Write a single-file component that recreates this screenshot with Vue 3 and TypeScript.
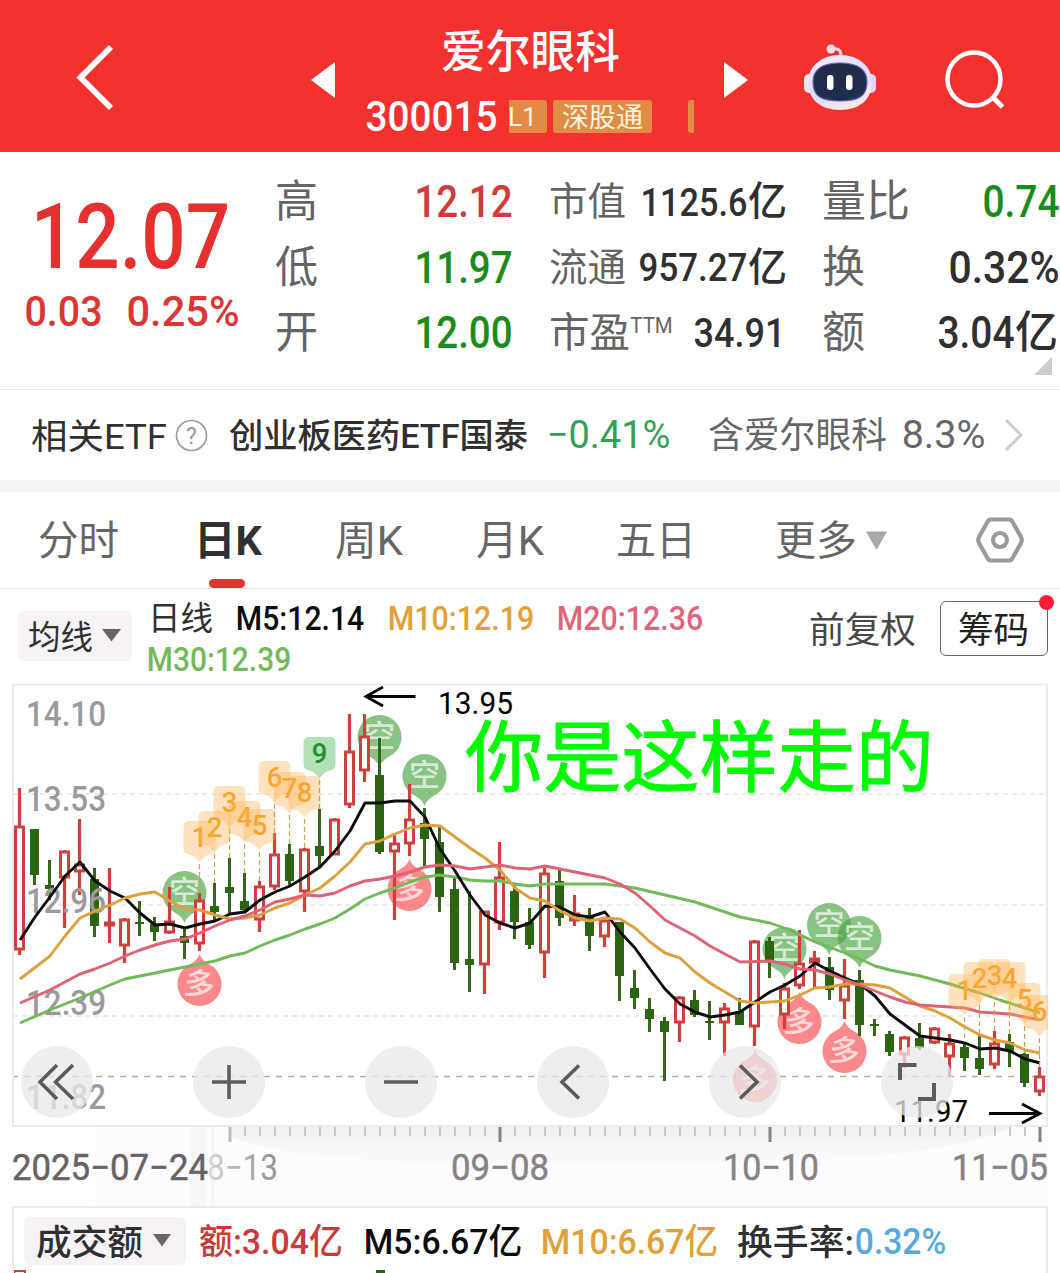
<script setup lang="ts">
import { h, type FunctionalComponent } from 'vue'

interface FitProps { t: string; w: number; s: number; b?: number }

// Condensed label: stretches its glyphs to the given width; the box bottom is the baseline.
const Fit: FunctionalComponent<FitProps> = (p) => {
  const bearing = p.t.charCodeAt(0) > 0x3000 ? 0 : p.s * 0.035
  return h('svg', { width: p.w, height: p.s, style: 'overflow:visible;flex:none;display:block' }, [
    h('text', {
      x: -bearing, y: p.s, 'font-size': p.s, 'font-weight': p.b ?? 400, fill: 'currentColor',
      textLength: p.w + bearing * 2, lengthAdjust: 'spacingAndGlyphs',
    }, p.t),
  ])
}
Fit.props = ['t', 'w', 's', 'b']

type Candle = [kind: 'R' | 'G', high: number, top: number, bottom: number, low: number]
const candles: Candle[] = [
  ['R', 788, 826, 950, 955], ['G', 829, 829, 875, 885], ['G', 860, 885, 889, 900], ['R', 850, 851, 878, 928],
  ['R', 819, 864, 872, 895], ['G', 868, 879, 926, 937], ['R', 868, 922, 926, 943], ['R', 918, 919, 946, 963],
  ['G', 901, 922, 924, 936], ['G', 917, 924, 932, 941], ['R', 887, 921, 933, 934], ['G', 928, 936, 943, 959],
  ['R', 893, 900, 944, 951], ['G', 883, 906, 912, 922], ['G', 858, 887, 893, 913], ['G', 873, 901, 910, 913],
  ['R', 881, 886, 920, 932], ['R', 833, 854, 887, 890], ['G', 844, 854, 881, 885], ['R', 848, 849, 892, 912],
  ['G', 809, 846, 856, 867], ['R', 818, 819, 855, 855], ['R', 714, 751, 805, 808], ['R', 714, 736, 771, 782],
  ['G', 738, 775, 852, 854], ['R', 833, 843, 852, 920], ['R', 784, 819, 844, 856], ['G', 808, 823, 839, 867],
  ['G', 825, 842, 897, 912], ['G', 877, 889, 963, 970], ['G', 891, 959, 965, 992], ['R', 911, 911, 965, 994],
  ['R', 842, 877, 923, 930], ['G', 883, 891, 922, 939], ['G', 908, 922, 945, 949], ['R', 868, 873, 953, 978],
  ['G', 870, 881, 918, 926], ['R', 895, 913, 921, 926], ['G', 908, 915, 936, 951], ['R', 917, 920, 937, 947],
  ['G', 922, 922, 976, 1001], ['G', 970, 988, 998, 1009], ['G', 998, 1009, 1019, 1032], ['G', 1017, 1021, 1032, 1081],
  ['R', 996, 997, 1023, 1042], ['G', 990, 1000, 1015, 1017], ['G', 1001, 1021, 1023, 1040], ['R', 1003, 1008, 1023, 1056],
  ['G', 998, 1011, 1025, 1025], ['R', 940, 941, 1027, 1046], ['G', 937, 941, 962, 978], ['R', 983, 988, 1015, 1029],
  ['R', 930, 963, 986, 989], ['R', 951, 958, 963, 988], ['G', 957, 967, 990, 1000], ['R', 959, 985, 1001, 1019],
  ['G', 970, 980, 1025, 1036], ['G', 1019, 1024, 1026, 1036], ['G', 1031, 1034, 1052, 1056], ['R', 1036, 1037, 1055, 1068],
  ['G', 1023, 1038, 1048, 1050], ['R', 1027, 1028, 1043, 1044], ['R', 1034, 1043, 1057, 1077], ['G', 1042, 1047, 1058, 1071],
  ['G', 1034, 1058, 1069, 1075], ['R', 1031, 1043, 1065, 1069], ['G', 1034, 1042, 1051, 1067], ['G', 1053, 1054, 1083, 1087],
  ['R', 1067, 1076, 1092, 1096],
]
const cx = (i: number) => 19.5 + 15 * i

const averages = [
  { c: '#72b95a', d: '20,1023 50,1010 80,998 110,985 125,979 140,976 155,973 170,970 185,967 200,964 215,961 230,956 245,953 260,946 275,940 290,935 305,929 320,924 335,918 350,909 365,899 380,893 395,888 410,882 425,877 440,875 455,877 470,880 485,881 500,881 515,884 530,886 545,884 605,884 635,888 665,895 695,902 740,917 770,923 790,930 815,942 845,953 860,959 875,966 890,970 920,976 950,984 980,993 1000,1000 1025,1008 1040,1013' },
  { c: '#0c0c0c', d: '20,940 35,917 50,897 65,876 80,862 95,881 110,891 125,898 140,913 155,925 170,924 185,928 200,924 215,921 230,914 245,912 260,900 275,892 290,886 305,877 320,867 335,851 350,831 365,803 380,803 395,801 410,801 425,817 440,849 455,871 470,895 485,915 500,923 515,928 530,923 545,906 560,907 575,915 590,917 605,912 620,932 635,948 650,969 665,989 680,1004 695,1012 710,1017 725,1015 740,1012 755,1002 770,992 785,985 800,976 815,963 830,971 845,978 860,984 875,996 890,1014 905,1025 920,1036 935,1038 950,1040 965,1043 980,1049 995,1048 1010,1051 1025,1059 1040,1063' },
  { c: '#dda03c', d: '20,979 50,956 65,936 80,918 95,911 110,905 125,898 140,894 155,892 170,901 185,909 200,910 215,915 230,919 245,918 260,915 275,908 290,903 305,895 320,888 335,876 350,862 365,844 380,841 395,834 410,828 425,825 440,826 455,837 470,848 485,858 500,870 515,888 530,898 545,901 560,911 575,918 590,921 605,918 620,919 635,928 650,942 665,953 680,958 695,972 710,983 725,992 740,1001 755,1003 770,1002 785,1001 800,995 815,988 830,987 845,984 860,984 875,985 890,988 905,997 920,1006 935,1011 950,1018 965,1027 980,1035 995,1040 1010,1043 1025,1050 1040,1053' },
  { c: '#df6275', d: '20,1003 50,990 80,974 95,969 110,963 125,956 140,950 155,945 170,941 185,939 200,933 215,926 230,920 245,916 260,910 275,902 290,899 305,895 320,896 335,893 350,886 365,881 380,879 395,876 410,872 425,867 440,865 455,866 470,869 485,867 500,865 515,868 530,869 545,866 560,869 605,878 620,884 635,893 650,906 665,920 680,928 695,936 710,946 725,954 740,962 770,961 785,964 800,969 815,970 830,974 845,980 860,985 875,991 890,997 905,1002 920,1005 950,1007 965,1008 980,1012 1010,1014 1040,1020' },
]

const shortPins = [[184.5, 893], [379.5, 737], [424.5, 776], [784.5, 949], [829, 925], [859.5, 938]]
const longPins = [[199.5, 984], [409.5, 889], [755, 1080], [799.5, 1022], [844.5, 1051]]

// [digit, candle index, top of the tag]
const tags: [string, number, number][] = [
  ['1', 12, 821], ['2', 13, 811], ['3', 14, 786], ['4', 15, 801], ['5', 16, 809], ['6', 17, 761], ['7', 18, 772], ['8', 19, 776], ['9', 20, 737],
  ['1', 63, 974], ['2', 64, 962], ['3', 65, 959], ['4', 66, 962], ['5', 67, 983], ['6', 68, 995],
]
const tagPath = (x: number, y: number) =>
  `M${x - 11} ${y}h22a5 5 0 0 1 5 5v23q0 4 -4 5l-6 2l-6 6l-6 -6l-6 -2q-4 -1 -4 -5v-23a5 5 0 0 1 5 -5z`

const prices = [['14.10', 726], ['13.53', 811], ['12.96', 913], ['12.39', 1015], ['11.82', 1109]] as const
const ticks = Array.from({ length: 55 }, (_, i) => ({ x: 230 + 15 * i, major: i % 18 === 0 }))
const tools = [
  'M36 19L19 36L36 53M52 19L34.500 36L52 53',
  'M19 36H53M36 19V53',
  'M19 36H53',
  'M42 19.500L25 36L42 52.500',
  'M31 19.500L48 36L31 52.500',
  'M19 34V19H35.500M53 37V53H37',
]
</script>

<template>
  <main class="page">
    <header class="top">
      <svg class="back" width="40" height="70" viewBox="0 0 40 70"><path d="M36 5L5.500 35.500L36 66" fill="none" stroke="#fff" stroke-width="5.800" /></svg>
      <svg class="prev" width="24" height="36" viewBox="0 0 24 36"><path d="M24 0V36L0 18z" fill="#fff" /></svg>
      <div class="stock">
        <Fit class="name" t="爱尔眼科" :w="179" :s="45" :b="500" />
        <div class="code">
          <Fit t="300015" :w="129" :s="42" :b="500" />
          <div class="badges">
            <div class="badge first"><Fit t="L1" :w="27" :s="26" /></div>
            <div class="badge mid"><Fit t="深股通" :w="81" :s="27" /></div>
            <div class="badge last"></div>
          </div>
        </div>
      </div>
      <svg class="next" width="24" height="36" viewBox="0 0 24 36"><path d="M0 0V36L24 18z" fill="#fff" /></svg>
      <svg class="bot" width="74" height="70" viewBox="0 0 74 70">
        <defs>
          <linearGradient id="shell" x1="0" y1="0" x2="0.6" y2="1"><stop offset="0" stop-color="#fff4fa" /><stop offset=".55" stop-color="#dfdcfb" /><stop offset="1" stop-color="#f6e8ee" /></linearGradient>
          <linearGradient id="visor" x1="0" y1="0" x2="0" y2="1"><stop offset="0" stop-color="#232b45" /><stop offset="1" stop-color="#1c2f50" /></linearGradient>
        </defs>
        <path d="M38 13C38 6 34 5 29 6" fill="none" stroke="#f8dbe4" stroke-width="3" /><circle cx="28" cy="6" r="4.500" fill="#fbe0e8" />
        <rect x="1" y="31" width="12" height="19" rx="5" fill="#f5e3f1" /><rect x="61" y="31" width="12" height="19" rx="5" fill="#e3d3f6" />
        <path d="M37 12C56 12 69 24 69 39C69 56 57 67 37 67C17 67 5 56 5 39C5 24 18 12 37 12z" fill="url(#shell)" />
        <path d="M37 20C54 20 64 26 64 39C64 53 56 58 37 58C18 58 10 53 10 39C10 26 20 20 37 20z" fill="url(#visor)" stroke="#6a60c0" stroke-width="1.200" />
        <rect x="24" y="32" width="6.500" height="15" rx="3" fill="#fff" /><rect x="43" y="32" width="6.500" height="15" rx="3" fill="#fff" />
      </svg>
      <svg class="search" width="62" height="64" viewBox="0 0 62 64"><g fill="none" stroke="#fff" stroke-width="4.500"><circle cx="30" cy="31" r="26.500" /><path d="M48.500 49L58.500 59" stroke-width="5" /></g></svg>
    </header>

    <section class="quote">
      <div class="price">
        <Fit class="big" t="12.07" :w="193" :s="90" :b="500" />
        <div class="change"><Fit t="0.03" :w="75" :s="43" :b="500" /><Fit t="0.25%" :w="110" :s="43" :b="500" /></div>
      </div>
      <dl class="col c1">
        <div><dt><Fit t="高" :w="43" :s="44" /></dt><dd class="up"><Fit t="12.12" :w="95" :s="45" :b="500" /></dd></div>
        <div><dt><Fit t="低" :w="43" :s="44" /></dt><dd class="down"><Fit t="11.97" :w="95" :s="45" :b="500" /></dd></div>
        <div><dt><Fit t="开" :w="43" :s="44" /></dt><dd class="down"><Fit t="12.00" :w="95" :s="45" :b="500" /></dd></div>
      </dl>
      <dl class="col c2">
        <div><dt><Fit t="市值" :w="77" :s="39" /></dt><dd><Fit t="1125.6" :w="104" :s="39.500" :b="500" /><Fit t="亿" :w="39" :s="40" :b="500" /></dd></div>
        <div><dt><Fit t="流通" :w="77" :s="39" /></dt><dd><Fit t="957.27" :w="106" :s="39.500" :b="500" /><Fit t="亿" :w="39" :s="40" :b="500" /></dd></div>
        <div><dt><Fit t="市盈" :w="81" :s="41" /><Fit class="ttm" t="TTM" :w="41" :s="22" /></dt><dd class="pe"><Fit t="34.91" :w="89" :s="41.500" :b="500" /></dd></div>
      </dl>
      <dl class="col c3">
        <div><dt><Fit t="量比" :w="88" :s="44" /></dt><dd class="down"><Fit t="0.74" :w="74" :s="45" :b="500" /></dd></div>
        <div><dt><Fit t="换" :w="43" :s="44" /></dt><dd><Fit t="0.32%" :w="108" :s="45" :b="500" /></dd></div>
        <div><dt><Fit t="额" :w="43" :s="44" /></dt><dd><Fit t="3.04" :w="74" :s="45" :b="500" /><Fit t="亿" :w="43" :s="44" :b="500" /></dd></div>
      </dl>
      <svg class="corner" width="18" height="18"><path d="M18 0V18H0z" fill="#ccc" /></svg>
    </section>

    <section class="etf">
      <Fit t="相关ETF" :w="136" :s="35.500" />
      <svg class="help" width="33" height="33" viewBox="0 0 33 33"><circle cx="16.500" cy="16.500" r="15" fill="none" stroke="#999" stroke-width="1.600" /><text x="16.500" y="24.500" font-size="23" text-anchor="middle" fill="#999">?</text></svg>
      <Fit class="fund" t="创业板医药ETF国泰" :w="299" :s="34" :b="500" />
      <Fit class="loss" t="−0.41%" :w="121" :s="39" />
      <Fit class="holds" t="含爱尔眼科" :w="179" :s="36" />
      <Fit class="pct" t="8.3%" :w="81" :s="39" />
      <svg class="go" width="20" height="34" viewBox="0 0 20 34"><path d="M2 2L17 17L2 32" fill="none" stroke="#ccc" stroke-width="3" /></svg>
    </section>

    <nav class="tabs">
      <Fit t="分时" :w="81" :s="41" />
      <div class="on"><Fit t="日K" :w="68" :s="41" :b="700" /></div>
      <Fit t="周K" :w="68" :s="41" />
      <Fit t="月K" :w="68" :s="41" />
      <Fit t="五日" :w="80" :s="41" />
      <Fit t="更多" :w="82" :s="41" />
      <svg class="more" width="23" height="19"><path d="M1 .5H22L11.500 19z" fill="#aaa8aa" /></svg>
      <svg class="gear" width="50" height="48" viewBox="0 0 50 48"><path d="M16 3.500H34Q36 3.500 37 5L46 21Q47.500 24 46 27L37 43Q36 44.500 34 44.500H16Q14 44.500 13 43L4 27Q2.500 24 4 21L13 5Q14 3.500 16 3.500z" fill="none" stroke="#999" stroke-width="4.200" /><circle cx="25" cy="24" r="7" fill="none" stroke="#999" stroke-width="4.200" /></svg>
    </nav>

    <section class="ma">
      <div class="chip"><Fit t="均线" :w="65" :s="33" /><svg width="19" height="13"><path d="M0 0H19L9.500 12.500z" fill="#666" /></svg></div>
      <div class="legend">
        <div class="line">
          <Fit class="day" t="日线" :w="65" :s="33" />
          <Fit class="m5" t="M5:12.14" :w="126" :s="33" :b="500" />
          <Fit class="m10" t="M10:12.19" :w="144" :s="33" :b="500" />
          <Fit class="m20" t="M20:12.36" :w="144" :s="33" :b="500" />
        </div>
        <Fit class="m30" t="M30:12.39" :w="142" :s="33" :b="500" />
      </div>
      <Fit class="adjust" t="前复权" :w="107" :s="36" />
      <div class="cost"><Fit t="筹码" :w="71" :s="36" /><i></i></div>
    </section>

    <section class="chart">
      <svg width="1060" height="526" viewBox="0 680 1060 526">
        <defs>
          <linearGradient id="haze" x1="0" y1="0" x2="0" y2="1"><stop offset="0" stop-color="#f1eff2" /><stop offset=".5" stop-color="#f8f5f9" /><stop offset="1" stop-color="#fbf8fb" /></linearGradient>
          <linearGradient id="fade" gradientUnits="userSpaceOnUse" x1="200" y1="0" x2="275" y2="0"><stop offset="0" stop-color="#e8e6e8" /><stop offset=".4" stop-color="#bbb" /><stop offset="1" stop-color="#949294" /></linearGradient>
          <clipPath id="frame"><rect x="12" y="684" width="1036" height="443" /></clipPath>
        </defs>
        <rect x="95" y="1127" width="953" height="79" fill="#fefbfe" />
        <path d="M230 1127H1010Q950 1158 760 1162H420Q280 1158 230 1136z" fill="url(#haze)" />
        <path d="M191 1127h15v83h-15zM211 1127h4v83h-4z" fill="#f7f6f7" />
        <g stroke="#e6e6e6" stroke-width="1.500" stroke-dasharray="5 4"><path d="M13 794H1047M13 905H1047M13 1016H1047" /></g>
        <path d="M12 1076.500H1047" stroke="#b7aa88" stroke-width="1.600" stroke-dasharray="6 6" />
        <rect x="13" y="684.500" width="1034" height="441.500" fill="none" stroke="#ebebeb" stroke-width="2" />

        <g v-for="[x, y] in shortPins" :key="`s${x}`" :transform="`translate(${x} ${y})`">
          <path d="M0 30Q-2 24 -9 20A22 22 0 1 1 9 20Q2 24 0 30z" fill="#4fa548" fill-opacity=".67" />
          <text y="10" font-size="31" font-weight="500" text-anchor="middle" fill="#fff" fill-opacity=".68">空</text>
        </g>
        <g v-for="[x, y] in longPins" :key="`l${x}`" :transform="`translate(${x} ${y})`">
          <path d="M0 -30Q2 -24 9 -20A22 22 0 1 1 -9 -20Q-2 -24 0 -30z" fill="#f9494f" fill-opacity=".65" />
          <text y="11" font-size="31" font-weight="500" text-anchor="middle" fill="#fff" fill-opacity=".68" transform="rotate(8)">多</text>
        </g>

        <g v-for="([k, hi, top, bot, lo], i) in candles" :key="i">
          <template v-if="k === 'R'">
            <path :d="`M${cx(i)} ${hi}V${top}M${cx(i)} ${bot}V${lo}`" stroke="#cf403c" stroke-width="3.200" />
            <rect :x="cx(i) - 4" :y="top + 1" width="8" :height="Math.max(bot - top - 2, 1)" :fill="bot - top < 6 ? '#cf403c' : '#fff'" stroke="#cf403c" stroke-width="3" />
          </template>
          <template v-else>
            <path :d="`M${cx(i)} ${hi}V${lo}`" stroke="#38651e" stroke-width="3" />
            <rect :x="cx(i) - 4.500" :y="top" width="9" :height="bot - top" fill="#2c6411" />
          </template>
        </g>

        <text v-for="[t, y] in prices" :key="t" x="26" :y="y" textLength="80" lengthAdjust="spacingAndGlyphs" font-size="34.500" font-weight="500" fill="#9b999b">{{ t }}</text>
        <polyline v-for="a in averages" :key="a.c" :points="a.d" fill="none" :stroke="a.c" stroke-width="2.900" stroke-linejoin="round" />

        <g clip-path="url(#frame)">
          <g v-for="([n, i, y], k) in tags" :key="k">
            <path :d="`M${cx(i)} ${y + 43}V${candles[i][1]}`" stroke="#c8a158" stroke-width="1.200" stroke-dasharray="5 3" />
            <path :d="tagPath(cx(i), y)" :fill="n === '9' ? '#5cbd66' : '#fdb04e'" :fill-opacity="n === '9' ? 0.47 : 0.37" />
            <text :x="cx(i)" :y="y + 26" font-size="27.500" font-weight="500" text-anchor="middle" :fill="n === '9' ? '#26902b' : '#f8a530'">{{ n }}</text>
          </g>
        </g>

        <g fill="none" stroke="#000" stroke-width="2.800"><path d="M415.500 696.500H366M383 687L366 696.500L383 706M989 1113.500H1039M1022 1104L1040 1113.500L1022 1123" /></g>
        <text x="438" y="714" textLength="75" lengthAdjust="spacingAndGlyphs" font-size="30.500">13.95</text>
        <text x="894" y="1122" textLength="74" lengthAdjust="spacingAndGlyphs" font-size="30.500">11.97</text>
        <text x="465" y="786" textLength="469" lengthAdjust="spacingAndGlyphs" font-size="78" font-weight="400" fill="#00fb00" stroke="#00fb00" stroke-width=".9">你是这样走的</text>

        <path v-for="t in ticks" :key="t.x" :d="`M${t.x} 1127V${t.major ? 1142 : 1136}`" :stroke="t.major ? (t.x === 230 ? '#bbb' : '#858385') : '#c4c2c4'" :stroke-width="t.major ? 3 : 1.800" />
        <g font-size="36" font-weight="400" stroke-width=".5">
          <text x="207" y="1180" textLength="71" lengthAdjust="spacingAndGlyphs" fill="url(#fade)">8−13</text>
          <text x="12" y="1180" textLength="196" lengthAdjust="spacingAndGlyphs" fill="#656365" stroke="#656365">2025−07−24</text>
          <text x="451" y="1180" textLength="98" lengthAdjust="spacingAndGlyphs" fill="#858385" stroke="#858385">09−08</text>
          <text x="723" y="1180" textLength="96" lengthAdjust="spacingAndGlyphs" fill="#858385" stroke="#858385">10−10</text>
          <text x="952" y="1180" textLength="96" lengthAdjust="spacingAndGlyphs" fill="#858385" stroke="#858385">11−05</text>
        </g>
      </svg>
      <div class="tools">
        <button v-for="(d, i) in tools" :key="i"><svg width="72" height="72"><path :d="d" fill="none" stroke="#5c5c5c" :stroke-width="i === 5 ? 4 : 3.600" /></svg></button>
      </div>
    </section>

    <section class="volume">
      <div class="chip"><Fit t="成交额" :w="107" :s="35.500" :b="500" /><svg width="18" height="13"><path d="M0 0H18L9 12.500z" fill="#666" /></svg></div>
      <Fit class="amt" t="额:3.04亿" :w="144" :s="35" :b="500" />
      <Fit class="v5" t="M5:6.67亿" :w="156" :s="35" :b="500" />
      <Fit class="v10" t="M10:6.67亿" :w="175" :s="35" :b="500" />
      <Fit class="turn" t="换手率:" :w="117" :s="35.500" :b="500" />
      <Fit class="rate" t="0.32%" :w="89" :s="36" :b="500" />
      <svg class="bars" width="1034" height="3"><path d="M.5 4V1H11V4" fill="none" stroke="#cf403c" stroke-width="2" /><path d="M362 0H371V3H362z" fill="#2c6411" /></svg>
    </section>
  </main>
</template>

<style>
body { margin: 0; background: #fff; }
</style>

<style scoped>
.page { width: 1060px; height: 1273px; overflow: hidden; background: #fff; color: #303030; font-family: Roboto, "Noto Sans CJK SC", sans-serif; }
svg { display: block; flex: none; }
.top { height: 152px; background: #f3322f; color: #fff; display: flex; align-items: flex-start; }
.back { margin: 42px 0 0 75px; }
.prev { margin: 62px 0 0 196px; }
.stock { width: 329px; margin: 23px 0 0 30px; }
.name { margin-left: 76px; }
.code { display: flex; align-items: flex-end; height: 42px; margin-top: 21px; padding-left: 2px; }
.badges { display: flex; margin: 0 0 -2px 13px; width: 186px; height: 33px; overflow: hidden; }
.badge { background: #e28b46; border-radius: 3px; height: 33px; box-sizing: border-box; flex: none; color: #fff6dc; padding-top: 0; }
.first { width: 38px; border-radius: 0 3px 3px 0; }
.mid { width: 99px; margin-left: 6px; padding: 0 0 0 9px; }
.last { width: 20px; margin-left: 36px; }
.next { margin: 62px 0 0 30px; }
.bot { margin: 43px 0 0 55px; }
.search { margin: 48px 0 0 67px; }

.quote { height: 237px; border-bottom: 1px solid #ebebeb; display: flex; position: relative; }
.price { width: 250px; color: #dc3633; }
.big { margin: 26px 0 0 34px; color: #e4312f; }
.change { display: flex; gap: 27px; margin: 15px 0 0 26px; }
.col { margin: 0; height: 200px; }
.col > div { display: flex; align-items: flex-end; justify-content: space-between; height: 65.5px; }
.col > div:first-child { height: 65px; }
dt, dd { margin: 0; display: flex; align-items: flex-end; }
dt { color: #646464; }
dd { gap: 2px; }
.c1 { width: 236px; margin-left: 25px; }
.c2 { width: 238px; margin: -2px 0 0 38px; }
.c3 { width: 236px; margin-left: 35px; padding-right: 2px; }
.c2 > div:last-child { height: 66px; }
.ttm { margin: 0 0 14px 1px; }
.pe { padding-right: 3px; }
.up { color: #d23b39; }
.down { color: #1b8c1a; }
.corner { position: absolute; right: 8px; bottom: 14px; }

.etf { height: 58px; padding: 0 0 32px 31px; display: flex; align-items: flex-end; border-bottom: 12px solid #f5f5f5; }
.help { margin: 0 0 -4px 8px; }
.fund { margin-left: 21px; }
.loss { margin-left: 20px; color: #2fa354; }
.holds { margin-left: 39px; color: #666; }
.pct { margin-left: 16px; color: #666; }
.go { margin: 0 0 -4px 20px; }

.tabs { height: 63px; padding: 0 0 33px 38px; display: flex; align-items: flex-end; color: #666; border-bottom: 1px solid #e8e8e8; }
.on { position: relative; margin: 0 73px 0 75px; color: #303030; }
.on::after { content: ""; position: absolute; left: 15px; top: 65px; width: 36px; height: 9px; border-radius: 5px; background: #e23331; }
.tabs > :nth-child(4) { margin-left: 73px; }
.tabs > :nth-child(5) { margin-left: 72px; }
.tabs > :nth-child(6) { margin-left: 79px; }
.more { margin: 0 0 5px 8px; }
.gear { margin: 0 0 -9px 87px; }

.ma { height: 91px; display: flex; align-items: flex-start; }
.chip { background: #f6f2f6; border-radius: 6px; display: flex; align-items: flex-end; box-sizing: border-box; flex: none; }
.ma .chip { width: 114px; height: 50px; margin: 22px 0 0 18px; padding: 0 0 12px 10px; }
.ma .chip > :last-child { margin: 0 0 7px 9px; }
.legend { width: 560px; margin: 8px 0 0 16px; }
.line { display: flex; }
.m5 { margin-left: 24px; color: #0c0c0c; }
.m10 { margin-left: 26px; color: #e1a037; }
.m20 { margin-left: 25px; color: #e0657a; }
.m30 { margin-top: 8px; color: #72b95a; }
.adjust { margin: 18px 0 0 101px; color: #484848; }
.cost { position: relative; box-sizing: border-box; width: 108px; height: 55px; margin: 12px 0 0 24px; border: 1.5px solid #666; border-radius: 6px; padding: 5px 0 0 17px; color: #222; }
.cost i { position: absolute; right: -7px; top: -7px; width: 15px; height: 15px; border-radius: 50%; background: #ff1e35; }

.chart { height: 526px; position: relative; }
.tools { position: absolute; left: 21px; top: 366px; display: flex; gap: 100px; }
.tools button { width: 72px; height: 72px; padding: 0; border: 0; border-radius: 50%; background: rgba(233, 233, 233, .76); }

.volume { width: 1036px; height: 67px; box-sizing: border-box; margin-left: 12px; border: 2px solid #ebe9eb; border-bottom: 0; position: relative; display: flex; align-items: flex-end; padding: 0 0 19px 10px; }
.volume .chip { width: 162px; height: 48px; margin-bottom: -11px; padding: 0 0 11px 12px; }
.volume .chip > :last-child { margin: 0 0 7px 10px; }
.amt { margin-left: 13px; color: #ca3a38; }
.v5 { margin-left: 22px; color: #0c0c0c; }
.v10 { margin-left: 21px; color: #e1a037; }
.turn { margin-left: 20px; }
.rate { margin-left: 2px; color: #56a9dc; }
.bars { position: absolute; left: 0; bottom: 0; }
</style>
